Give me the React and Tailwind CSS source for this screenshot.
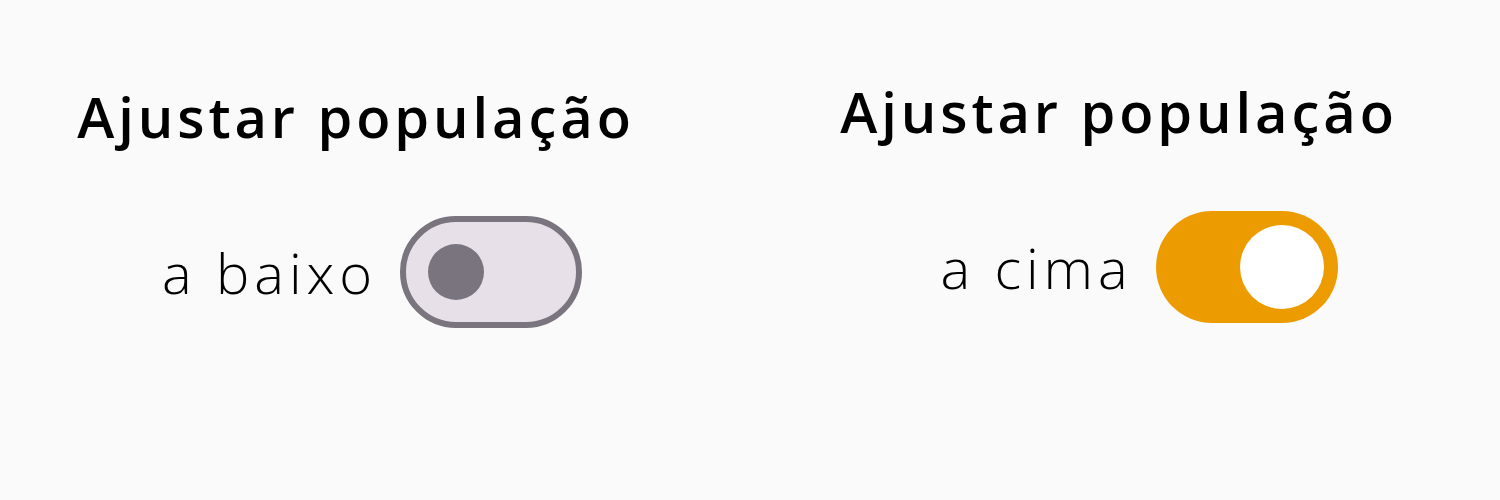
import React from "react";

const Toggle = ({ on }) => {
  if (on) {
    return (
      <div className="w-[182px] h-[112px] rounded-full bg-[#ec9b00] flex items-center justify-end pr-[14px]">
        <div className="w-[84px] h-[84px] rounded-full bg-white" />
      </div>
    );
  }
  return (
    <div className="w-[182px] h-[112px] rounded-full border-[6px] border-[#79747e] bg-[#e7e0e8] flex items-center pl-[22px]">
      <div className="w-[56px] h-[56px] rounded-full bg-[#79747e]" />
    </div>
  );
};

const Setting = ({ label, on, top, shift }) => (
  <div className={`w-[600px] flex flex-col items-center ${top}`}>
    <h2 className="text-[56px] leading-[56px] font-semibold tracking-[0.07em] text-black">
      Ajustar população
    </h2>
    <div className={`mt-[72px] flex items-center gap-[23px] ${shift}`}>
      <span className="text-[56px] leading-[56px] font-light tracking-[0.088em] text-black">
        {label}
      </span>
      <Toggle on={on} />
    </div>
  </div>
);

export default function App() {
  return (
    <div
      className="w-[1500px] h-[500px] bg-[#fafafa] flex pl-[56px] gap-[163px]"
      style={{ fontFamily: '"Open Sans", sans-serif' }}
    >
      <Setting label="a baixo" on={false} top="pt-[88px]" shift="pl-8" />
      <Setting label="a cima" on={true} top="pt-[83px]" shift="pl-[40px]" />
    </div>
  );
}
